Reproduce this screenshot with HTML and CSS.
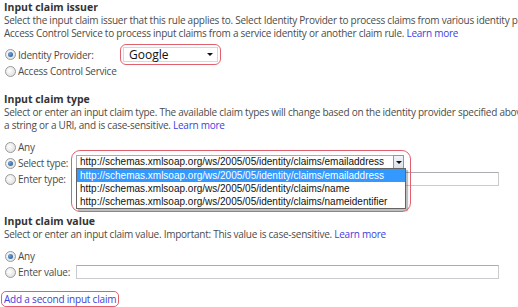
FILE: index.html
```html
<!DOCTYPE html>
<html lang="en">
<head>
    <meta charset="UTF-8">
    <title>Input claim</title>
    <link rel="stylesheet" href="styles.css">
</head>
<body>
    <div class="page">
        <!-- issuer -->
        <div class="section">
            <h2>Input claim issuer</h2>
            <p class="desc">Select the input claim issuer that this rule applies to. Select Identity Provider to process claims from various identity providers.<br>Access Control Service to process input claims from a service identity or another claim rule. <a href="#">Learn more</a></p>
            <div class="options first">
                <div class="row tall">
                    <span class="radio checked"></span>
                    <span class="label wide">Identity Provider:</span>
                    <span class="callout-inline">
                        <span class="combo">Google<span class="caret"></span></span>
                    </span>
                </div>
                <div class="row">
                    <span class="radio"></span>
                    <span class="label">Access Control Service</span>
                </div>
            </div>
        </div>

        <!-- claim type -->
        <div class="section">
            <h2>Input claim type</h2>
            <p class="desc">Select or enter an input claim type. The available claim types will change based on the identity provider specified above.<br>a string or a URI, and is case-sensitive. <a href="#">Learn more</a></p>
            <div class="options">
                <div class="row">
                    <span class="radio"></span>
                    <span class="label">Any</span>
                </div>
                <div class="row">
                    <span class="radio checked"></span>
                    <span class="label short">Select type:</span>
                    <div class="type-select">
                        <div class="select-box">
                            <span class="select-text">http://schemas.xmlsoap.org/ws/2005/05/identity/claims/emailaddress</span>
                            <span class="select-btn"><span class="caret"></span></span>
                        </div>
                        <ul class="dropdown">
                            <li class="selected">http://schemas.xmlsoap.org/ws/2005/05/identity/claims/emailaddress</li>
                            <li>http://schemas.xmlsoap.org/ws/2005/05/identity/claims/name</li>
                            <li>http://schemas.xmlsoap.org/ws/2005/05/identity/claims/nameidentifier</li>
                        </ul>
                        <span class="callout"></span>
                    </div>
                </div>
                <div class="row">
                    <span class="radio"></span>
                    <span class="label short">Enter type:</span>
                    <span class="text-input"></span>
                </div>
            </div>
        </div>

        <!-- claim value -->
        <div class="section last">
            <h2>Input claim value</h2>
            <p class="desc">Select or enter an input claim value. Important: This value is case-sensitive. <a href="#">Learn more</a></p>
            <div class="options">
                <div class="row">
                    <span class="radio checked"></span>
                    <span class="label">Any</span>
                </div>
                <div class="row">
                    <span class="radio"></span>
                    <span class="label short">Enter value:</span>
                    <span class="text-input"></span>
                </div>
            </div>
        </div>

        <a href="#" class="add-link">Add a second input claim</a>
    </div>
</body>
</html>
```

FILE: styles.css
```css
:root {
    --text: #4b4b4b;
    --heading: #333;
    --link: #4040e0;
    --callout: #e2606e;
}

html, body {
    margin: 0;
    background: #fff;
    overflow: hidden;
}

body {
    font-family: 'Open Sans', 'Segoe UI', sans-serif;
    font-size: 10px;
    letter-spacing: -0.25px;
    color: var(--text);
}

.page {
    padding: 0 4px;
    width: 700px;
}

h2 {
    margin: 0;
    font-size: 10.5px;
    font-weight: bold;
    letter-spacing: 0;
    line-height: 14px;
    color: var(--heading);
}

.section + .section {
    margin-top: 13px;
}

.section.last {
    margin-top: 27px;
}

.desc {
    margin: 0;
    line-height: 13px;
    white-space: nowrap;
}

a {
    color: var(--link);
    text-decoration: none;
}

.options {
    margin-top: 7px;
}

.options.first {
    margin-top: 6px;
}

.row {
    display: flex;
    align-items: center;
    height: 16px;
}

.row.tall {
    height: 17px;
}

.radio {
    width: 9px;
    height: 9px;
    border: 1px solid #9a9a9a;
    border-radius: 50%;
    background: radial-gradient(circle at 40% 40%, #fff, #d8d8d8);
    margin: 0 2px 0 1px;
    position: relative;
    flex: none;
}

.radio.checked::after {
    content: "";
    position: absolute;
    left: 2px;
    top: 2px;
    width: 5px;
    height: 5px;
    border-radius: 50%;
    background: radial-gradient(circle at 35% 35%, #6fa4dc, #1f4f8f);
}

.label {
    white-space: nowrap;
}

.label.wide {
    width: 102px;
}

.label.short {
    width: 58px;
}

.callout-inline {
    border: 1px solid var(--callout);
    border-radius: 6px;
    padding: 2px;
}

.combo {
    display: flex;
    align-items: center;
    justify-content: space-between;
    box-sizing: border-box;
    width: 95px;
    height: 15px;
    padding: 0 4px 0 5px;
    border: 1px solid #d8d8d8;
    background: #fff;
    color: #111;
    font-size: 12px;
    letter-spacing: 0;
}

.caret {
    width: 0;
    height: 0;
    border-left: 3px solid transparent;
    border-right: 3px solid transparent;
    border-top: 3px solid #111;
}

.type-select {
    position: relative;
    width: 328px;
    align-self: flex-start;
    z-index: 2;
}

.select-box {
    display: flex;
    height: 12px;
    border: 1px solid #a5acb5;
    background: #fff;
    font-family: 'Liberation Sans', Arial, sans-serif;
    font-size: 10px;
    letter-spacing: 0;
    color: #111;
}

.select-text {
    flex: 1;
    padding-left: 3px;
    line-height: 12px;
    overflow: hidden;
    white-space: nowrap;
}

.select-btn {
    width: 9px;
    border: 1px solid #7d9ac0;
    background: linear-gradient(#f2f5f9, #d9e1ea);
    display: flex;
    align-items: center;
    justify-content: center;
    margin: -1px -1px -1px 0;
}

.dropdown {
    position: absolute;
    top: 13px;
    left: 0;
    width: 328px;
    margin: 0;
    padding: 0;
    list-style: none;
    border: 1px solid #646464;
    background: #fff;
    box-shadow: 2px 2px 1px rgba(0, 0, 0, 0.25);
    font-family: 'Liberation Sans', Arial, sans-serif;
    font-size: 10px;
    letter-spacing: 0;
    color: #111;
}

.dropdown li {
    height: 13px;
    line-height: 13px;
    padding-left: 3px;
    white-space: nowrap;
}

.dropdown li.selected {
    background: #3399ff;
    color: #fff;
}

.callout {
    position: absolute;
    left: -5px;
    top: -5px;
    width: 338px;
    height: 60px;
    border: 1px solid var(--callout);
    border-radius: 9px;
}

.text-input {
    width: 421px;
    height: 12px;
    border: 1px solid #c9cbcf;
    border-top-color: #abadb3;
    background: #fff;
}

.add-link {
    display: inline-block;
    margin-top: 11px;
    margin-left: -3px;
    padding: 0 2px;
    line-height: 14px;
    border: 1px solid var(--callout);
    border-radius: 5px;
    font-size: 10px;
    letter-spacing: -0.2px;
}
```
